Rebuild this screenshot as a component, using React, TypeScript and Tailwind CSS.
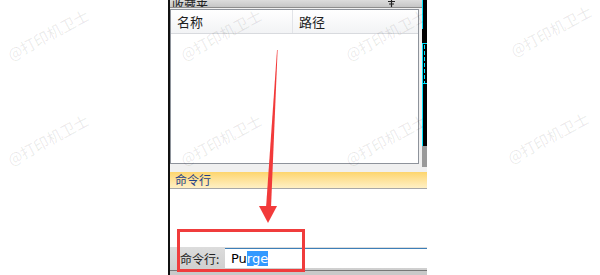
import React from 'react';

const cjk = "font-['Noto_Sans_CJK_SC','Noto_Sans',sans-serif]";

function Watermark({ x, y }: { x: number; y: number }) {
  return (
    <span
      className={`absolute ${cjk} text-[15px] leading-none text-black/[0.09] whitespace-nowrap origin-bottom-left`}
      style={{ left: x, top: y - 15, transform: 'rotate(-28deg)' }}
    >
      @打印机卫士
    </span>
  );
}

export default function App() {
  const marks = [
    [12, 62], [185, 62], [350, 62], [515, 58],
    [12, 167], [185, 167], [350, 167], [512, 165],
  ];

  return (
    <div className="relative w-[600px] h-[275px] bg-white overflow-hidden flex">
      <div className="w-[168px] shrink-0" />
      <div className="w-[2px] shrink-0 bg-[#111]" />

      {/* Panel */}
      <div className="w-[257px] shrink-0 flex flex-col bg-[#f0f0f0]">
        <div className="h-[167px] flex">
          <div className="w-[252px] flex flex-col">
            {/* title bar */}
            <div className="h-[8px] bg-gradient-to-b from-[#dcdcdc] to-[#c6c6c6] border-b border-[#8c8c8c] flex items-end justify-between overflow-hidden">
              <span className={`${cjk} text-[12px] leading-none text-[#222] ml-[2px] mb-[-4px]`}>收藏夹</span>
              <svg width="9" height="7" viewBox="0 0 9 7" className="mr-[26px]">
                <path d="M4.5 0V7M1 1.5H8M2 4H7" stroke="#222" strokeWidth="1.2" fill="none" />
              </svg>
            </div>
            {/* list */}
            <div className="mt-[1px] mr-[3px] h-[155px] bg-white border border-[#8e939b] flex flex-col">
              <div className="h-[24px] flex bg-gradient-to-b from-white to-[#f2f3f5] border-b border-[#d8dade]">
                <div className={`w-[122px] border-r border-[#e2e4e8] pl-[6px] flex items-center ${cjk} text-[13px] text-[#1e1e1e]`}>名称</div>
                <div className={`pl-[6px] flex items-center ${cjk} text-[13px] text-[#1e1e1e]`}>路径</div>
              </div>
            </div>
          </div>
          {/* dark strip */}
          <div className="w-[5px] flex flex-col">
            <svg width="5" height="146" viewBox="0 0 5 146" className="block">
              <rect x="0" y="0" width="5" height="146" fill="#000" />
              <rect x="0" y="0" width="1" height="29" fill="#00e5ff" />
              <rect x="0" y="43" width="1" height="103" fill="#00e5ff" />
              <rect x="0" y="43" width="5" height="1" fill="#00e5ff" />
              <path d="M2.5 45V83" stroke="#00e5ff" strokeWidth="1" strokeDasharray="4 2" />
              <rect x="0" y="83" width="5" height="1" fill="#00e5ff" />
            </svg>
            <div className="flex-1 bg-[#9a9a9a]" />
          </div>
        </div>

        <div className="h-[5px]" />
        {/* yellow header */}
        <div className="h-[16px] bg-gradient-to-b from-[#fdd56c] to-[#fff0c4] flex items-center pl-[5px]">
          <span className={`${cjk} text-[12px] leading-none text-[#1f3f86]`}>命令行</span>
        </div>
        <div className="h-[1px] bg-[#a8a8a8]" />
        <div className="h-[58px] bg-white" />

        {/* command line */}
        <div className="h-[23px] flex bg-gradient-to-b from-[#dcdcdc] to-[#cfcfcf]">
          <div className={`w-[55px] pl-[10px] flex items-center ${cjk} text-[12px] text-[#222]`}>命令行:</div>
          <div className="flex-1 mt-[1px] mb-[2px] bg-white border-t border-[#3d7fb8] flex items-center pl-[6px]">
            <span className="font-['DejaVu_Sans',sans-serif] text-[13px] leading-none text-black">
              Pu<span className="bg-[#3399ff] text-white">rge</span>
            </span>
          </div>
        </div>
        <div className="h-[1px] bg-[#777]" />
        <div className="flex-1 bg-[#c9c9c9]" />
      </div>

      <div className="flex-1" />

      {/* watermarks */}
      {marks.map(([x, y], i) => (
        <Watermark key={i} x={x} y={y} />
      ))}

      {/* red highlight box */}
      <div className="absolute left-[177px] top-[229px] w-[128px] h-[43px] border-[3px] border-[#f03c3c] pointer-events-none" />

      {/* red arrow */}
      <svg className="absolute left-0 top-0 pointer-events-none" width="600" height="275" viewBox="0 0 600 275">
        <path d="M277 50 L277.6 50 L271 208 L266 208 Z" fill="#f23a3a" />
        <path d="M259 206 L277 206 L268 223 Z" fill="#f23a3a" />
      </svg>
    </div>
  );
}
